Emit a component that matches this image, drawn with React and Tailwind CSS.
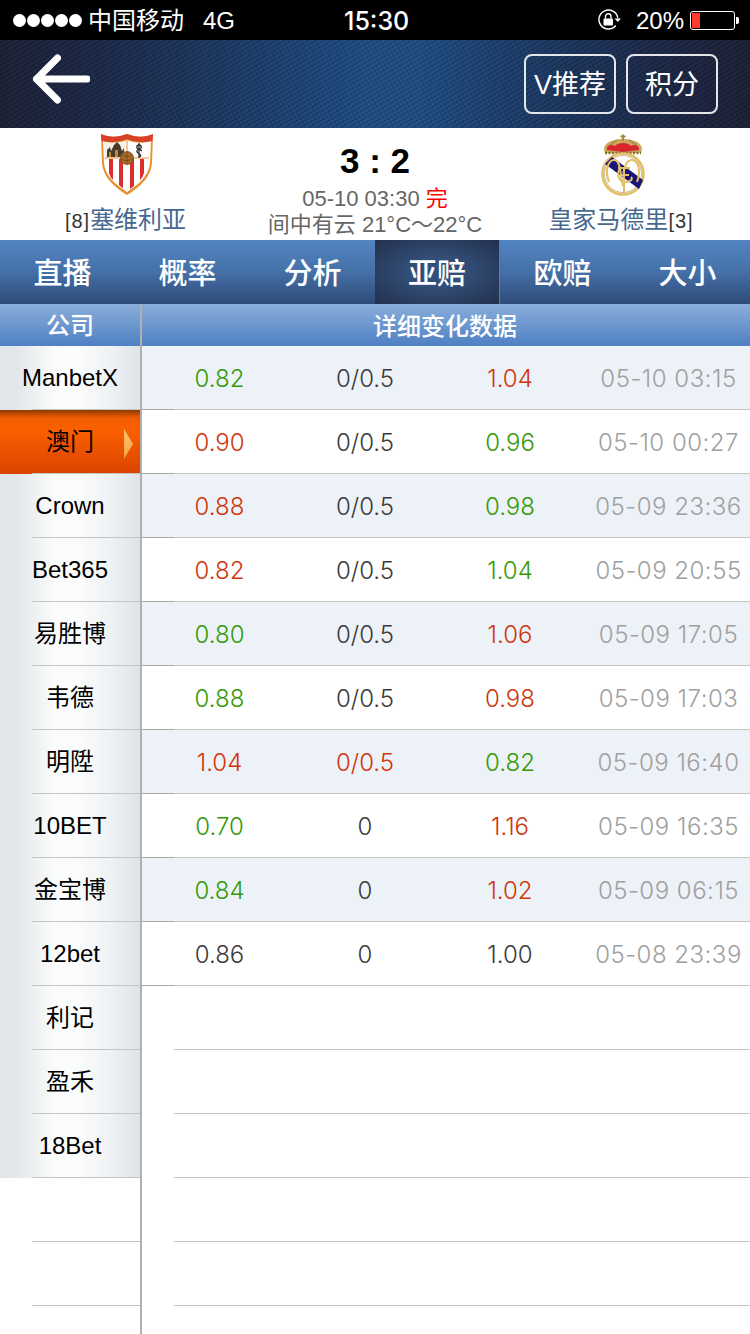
import React from 'react';

const rows = [
  { a: '0.82', ac: 'g', b: '0/0.5', c: '1.04', cc: 'r', t: '05-10 03:15' },
  { a: '0.90', ac: 'r', b: '0/0.5', c: '0.96', cc: 'g', t: '05-10 00:27' },
  { a: '0.88', ac: 'r', b: '0/0.5', c: '0.98', cc: 'g', t: '05-09 23:36' },
  { a: '0.82', ac: 'r', b: '0/0.5', c: '1.04', cc: 'g', t: '05-09 20:55' },
  { a: '0.80', ac: 'g', b: '0/0.5', c: '1.06', cc: 'r', t: '05-09 17:05' },
  { a: '0.88', ac: 'g', b: '0/0.5', c: '0.98', cc: 'r', t: '05-09 17:03' },
  { a: '1.04', ac: 'r', b: '0/0.5', bc: 'r', c: '0.82', cc: 'g', t: '05-09 16:40' },
  { a: '0.70', ac: 'g', b: '0', c: '1.16', cc: 'r', t: '05-09 16:35' },
  { a: '0.84', ac: 'g', b: '0', c: '1.02', cc: 'r', t: '05-09 06:15' },
  { a: '0.86', ac: 'n', b: '0', c: '1.00', cc: 'n', t: '05-08 23:39' },
];

const companies = ['ManbetX', '澳门', 'Crown', 'Bet365', '易胜博', '韦德', '明陞', '10BET', '金宝博', '12bet', '利记', '盈禾', '18Bet'];
const tabs = ['直播', '概率', '分析', '亚赔', '欧赔', '大小'];

const tone = {
  g: 'text-[#339a06]',
  r: 'text-[#d0360c]',
  n: 'text-[#3a3a3a]',
};

function SevillaCrest() {
  return (
    <svg width="54" height="62" viewBox="0 0 54 62">
      <path d="M1 1 C10 5 19 4 27 1 C35 4 44 5 53 1 L52 30 C51 44 40 54 27 62 C14 54 3 44 2 30 Z" fill="#e8902c" />
      <path d="M3 8 C11 11 20 10 27 7 C34 10 43 11 51 8 L50 30 C49 43 38 52 27 59 C16 52 5 43 4 30 Z" fill="#fff" />
      <path d="M1 1 C10 5 19 4 27 1 C35 4 44 5 53 1 L52.500 8 C43 10 34 9 27 6 C20 9 11 10 1.500 8 Z" fill="#d8402a" />
      <path d="M5 25 L25 25 L25 8.500 C18 10.500 11 10.500 4 9 Z" fill="#f4f0e8" />
      <path d="M7 24 L7 17 L10 14 L11 18 L14 12 L17 9 L20 12 L22 18 L24 15 L24 24 Z" fill="#4a3a28" />
      <path d="M9 24 L9 19 L11 19 L11 24 Z M15 24 L15 17 L18 17 L18 24 Z" fill="#b88a40" />
      <circle cx="39" cy="14" r="2.200" fill="none" stroke="#222" strokeWidth="1.200" />
      <path d="M42 18 C38 15 35 18 38 20 C41 21 42 24 38 24 M39 10 L39 25" fill="none" stroke="#222" strokeWidth="1.200" />
      <path d="M5 25 L49 25 M27 6 L27 25" stroke="#e8902c" strokeWidth="1" />
      <path d="M9 26 L13 26 L13 47 C11 45 10 43 9 40 Z M19 26 L23 26 L23 55 C21 54 20 53 19 52 Z M30 26 L34 26 L34 53 L30 56 Z M40 26 L44 26 L44 40 C43 43 42 45 40 47 Z" fill="#dc2e2e" />
      <circle cx="27" cy="25" r="6.500" fill="#a86a28" stroke="#7a4a18" strokeWidth="0.800" />
      <path d="M22 22 C25 24 29 24 32 22 M21 26 C25 28 29 28 33 26 M27 19 L27 31" fill="none" stroke="#6a4014" strokeWidth="0.700" />
    </svg>
  );
}

function MadridCrest() {
  return (
    <svg width="46" height="64" viewBox="0 0 46 64">
      {/* crown */}
      <path d="M5 20 C1 11 11 6 23 6 C35 6 45 11 41 20 Z" fill="#c9a860" />
      <path d="M7 17 C6 12 12 11 15 13 C18 9 28 9 31 13 C34 11 40 12 39 17 L23 19 Z" fill="#d8242c" />
      <path d="M5 20 L41 20" stroke="#8a6a2a" strokeWidth="2.400" strokeDasharray="2 1.500" />
      <path d="M23 8 L23 1.500 M20.500 3.500 L25.500 3.500" stroke="#a8853c" strokeWidth="1.800" />
      <path d="M10 12 L17 7 M36 12 L29 7" stroke="#a8853c" strokeWidth="1.400" />
      {/* ring */}
      <circle cx="23" cy="41" r="20.500" fill="#fff" stroke="#e3c068" strokeWidth="2.600" />
      <circle cx="23" cy="41" r="18.500" fill="none" stroke="#a88c40" strokeWidth="0.600" />
      <path d="M5 31 L12 24 L43 47 L39 56 Z" fill="#1a1478" />
      <path d="M9 49 C4 36 9 26 15 27 C21 28 20 42 23 53 M37 49 C42 36 37 26 31 27 C25 28 25 36 23 40" fill="none" stroke="#e3c068" strokeWidth="2" />
      <path d="M18 35 L30 35 M20 35 C16 42 19 49 25 49 C31 49 33 46 31 44 M21 42 L29 42 M24 35 L24 59" fill="none" stroke="#e3c068" strokeWidth="2" />
    </svg>
  );
}

function LockRotate() {
  return (
    <svg width="24" height="22" viewBox="0 0 24 22">
      <path d="M17.800 16.500 A9.500 9.500 0 1 1 19.800 9" fill="none" stroke="#fff" strokeWidth="1.400" />
      <path d="M16.500 9.500 L23 9.500 L19.800 13 Z" fill="#fff" />
      <rect x="5.500" y="9.500" width="9.500" height="7" rx="1" fill="#fff" />
      <path d="M7.500 9.500 V7.500 C7.500 3.800 13 3.800 13 7.500 V9.500" fill="none" stroke="#fff" strokeWidth="1.400" />
    </svg>
  );
}

function BackArrow() {
  return (
    <svg width="60" height="56" viewBox="0 0 60 56">
      <path d="M27.500 7 L6.500 28 L27.500 49 M6.500 28 L57 28" fill="none" stroke="#fff" strokeWidth="7" strokeLinecap="round" strokeLinejoin="round" />
    </svg>
  );
}

function StatusBar() {
  return (
    <div className="h-10 bg-black text-white flex items-center justify-between pl-[13px] pr-[11px] relative">
      <div className="flex items-center">
        <div className="flex gap-[1px]">
          {[0, 1, 2, 3, 4].map((i) => (
            <span key={i} className="w-[13px] h-[13px] rounded-full bg-white" />
          ))}
        </div>
        <span className="ml-[6px] pt-[2px] text-[24px] leading-[40px]">中国移动</span>
        <span className="ml-[19px] pt-[2px] text-[24px] leading-[40px]">4G</span>
      </div>
      <div className="absolute left-[344px] top-[1px] text-[25px] leading-[40px] font-medium font-['Inter']">15:30</div>
      <div className="flex items-center">
        <LockRotate />
        <span className="ml-[14px] pt-[2px] text-[24px] leading-[40px]">20%</span>
        <div className="ml-[6px] w-[45px] h-[19px] border border-white rounded-[3px] p-[1px]">
          <div className="w-[8px] h-full bg-[#ff3b30]" />
        </div>
        <div className="ml-[1px] w-[3px] h-[7px] bg-white rounded-r-[2px]" />
      </div>
    </div>
  );
}

function Header() {
  return (
    <div className="h-[88px] flex items-start justify-between bg-[repeating-linear-gradient(-30deg,rgba(0,0,0,0.1)_0px,rgba(0,0,0,0.1)_2px,rgba(255,255,255,0.015)_2px,rgba(255,255,255,0.015)_4px),repeating-linear-gradient(60deg,rgba(0,0,0,0.08)_0px,rgba(0,0,0,0.08)_2px,transparent_2px,transparent_4px),linear-gradient(90deg,#1d2339_0%,#1d2a4a_12%,#1f5088_48%,#1f5088_56%,#1d2a4a_88%,#1d2339_100%)]">
      <div className="ml-[30px] mt-[11px]"><BackArrow /></div>
      <div className="flex gap-[10px] mt-[14px] mr-[32px]">
        <div className="w-[92px] h-[60px] pt-[3px] border-2 border-[#e4e6ea] rounded-[8px] flex items-center justify-center text-white text-[27px]">V推荐</div>
        <div className="w-[92px] h-[60px] pt-[3px] border-2 border-[#e4e6ea] rounded-[8px] flex items-center justify-center text-white text-[27px]">积分</div>
      </div>
    </div>
  );
}

function MatchInfo() {
  return (
    <div className="h-[112px] bg-white flex">
      <div className="w-[254px] flex flex-col items-center pt-[5px]">
        <SevillaCrest />
        <div className="mt-[10px] pr-[3px] text-[24px] leading-[30px] text-[#47688f]">
          <span className="text-[#333] text-[20px] tracking-[1px]">[8]</span>塞维利亚
        </div>
      </div>
      <div className="flex-1 flex flex-col items-center pt-[12px]">
        <div className="text-[35px] leading-[42px] font-bold text-black">3 : 2</div>
        <div className="mt-[4px] text-[22px] leading-[26px] text-[#666]">05-10 03:30 <span className="text-[#f00]">完</span></div>
        <div className="text-[22px] leading-[25px] text-[#666]">间中有云 21°C～22°C</div>
      </div>
      <div className="w-[254px] flex flex-col items-center pt-[5px]">
        <MadridCrest />
        <div className="mt-[8px] pr-[4px] text-[24px] leading-[30px] text-[#47688f]">
          皇家马德里<span className="text-[#333] text-[20px] tracking-[1px]">[3]</span>
        </div>
      </div>
    </div>
  );
}

function Tabs() {
  return (
    <div className="h-16 flex bg-gradient-to-b from-[#5285c3] via-[#4570a8] to-[#2f4a78]">
      {tabs.map((tab) => (
        <div
          key={tab}
          className={
            tab === '亚赔'
              ? 'w-[125px] pt-[5px] flex items-center justify-center text-white text-[29px] font-medium border-r border-[#4d7fb8] bg-[radial-gradient(ellipse_at_center,#334f79_30%,#23304d_100%)]'
              : 'w-[125px] pt-[5px] flex items-center justify-center text-white text-[29px] font-medium'
          }
        >
          {tab}
        </div>
      ))}
    </div>
  );
}

function CompanyRow({ name, active }) {
  if (active) {
    return (
      <div className="h-16 relative flex items-center justify-center text-black text-[24px] bg-[linear-gradient(180deg,#8c3a02_0%,#f05c00_12%,#fb6000_30%,#da4300_100%)]">
        <span>{name}</span>
        <svg className="absolute right-[7px] top-[19px]" width="9" height="30" viewBox="0 0 9 30">
          <defs>
            <linearGradient id="arrowFill" x1="0" y1="0" x2="0" y2="1">
              <stop offset="0" stopColor="#fcc878" />
              <stop offset="1" stopColor="#f9a03c" />
            </linearGradient>
          </defs>
          <path d="M0 0 L9 15 L0 30 Z" fill="url(#arrowFill)" />
        </svg>
        <div className="absolute left-8 right-0 bottom-0 h-px bg-[#c4c4c4]" />
      </div>
    );
  }
  return (
    <div className="h-16 relative flex items-center justify-center text-black text-[24px] bg-[linear-gradient(90deg,#e0e6e9_0%,#e2e7ea_12%,#fafbfb_38%,#fbfcfc_55%,#eef1f3_80%,#dee3e6_100%)]">
      <span>{name}</span>
      <div className="absolute left-8 right-0 bottom-0 h-px bg-[#c4c4c4]" />
    </div>
  );
}

function BlankRow() {
  return (
    <div className="h-16 pl-8 flex items-end">
      <div className="w-full h-px bg-[#c4c4c4]" />
    </div>
  );
}

function DataRow({ row, i }) {
  return (
    <div className={i % 2 === 0 ? 'h-16 relative flex items-center bg-[#edf1f8] text-[24px] font-[350] pt-[1px]' : 'h-16 relative flex items-center bg-white text-[24px] font-[350] pt-[1px]'}>
      <div className={`w-[155px] text-center ${tone[row.ac]}`}>{row.a}</div>
      <div className={`w-[136px] text-center ${row.bc ? tone[row.bc] : tone.n}`}>{row.b}</div>
      <div className={`w-[154px] text-center ${tone[row.cc]}`}>{row.c}</div>
      <div className="flex-1 text-center text-[#a0a0a0] whitespace-nowrap tracking-[0.5px]">{row.t}</div>
      {/* bottom line, the first stretch is darker */}
      <div className="absolute left-0 right-0 bottom-0 h-px bg-[#c4c4c4]" />
      <div className="absolute left-0 w-8 bottom-0 h-px bg-[#a8a8a8]" />
    </div>
  );
}

export default function App() {
  return (
    <div className="w-[750px] h-[1334px] overflow-hidden bg-white font-['Liberation_Sans','Noto_Sans_CJK_SC',sans-serif]">
      <StatusBar />
      <Header />
      <MatchInfo />
      <Tabs />
      <div className="flex">
        {/* left column */}
        <div className="w-[140px]">
          <div className="h-[42px] pt-[2px] flex items-center justify-center text-white text-[24px] font-medium bg-gradient-to-b from-[#8aaedb] to-[#4f80c3]">公司</div>
          {companies.map((name) => (
            <CompanyRow key={name} name={name} active={name === '澳门'} />
          ))}
          <BlankRow />
          <BlankRow />
          <BlankRow />
        </div>
        <div className="w-[2px] h-[1030px] bg-[#b0b0b0]" />
        {/* data column */}
        <div className="flex-1">
          <div className="h-[42px] pt-[3px] pr-[2px] flex items-center justify-center text-white text-[24px] font-medium bg-gradient-to-b from-[#8aaedb] to-[#4f80c3]">详细变化数据</div>
          <div className="font-['Inter']">
            {rows.map((row, i) => (
              <DataRow key={row.t} row={row} i={i} />
            ))}
          </div>
          {[0, 1, 2, 3, 4].map((i) => (
            <BlankRow key={i} />
          ))}
        </div>
      </div>
    </div>
  );
}
